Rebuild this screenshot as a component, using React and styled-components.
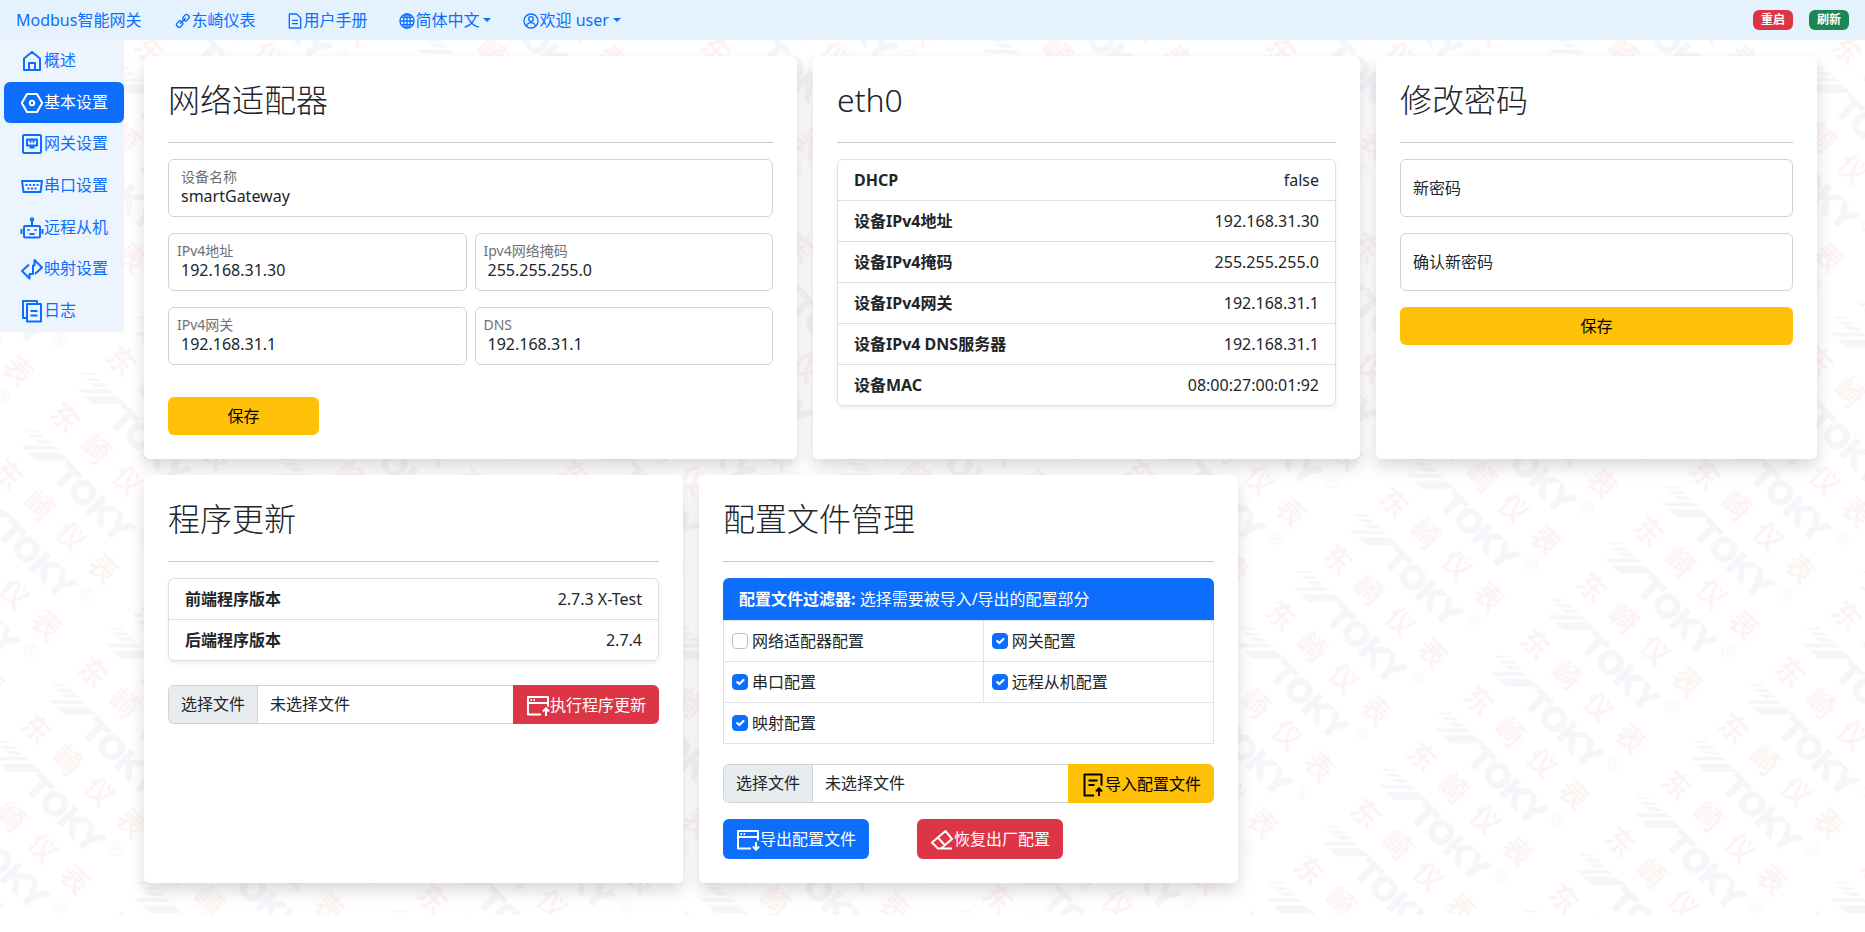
import React from 'react';
import styled, { createGlobalStyle } from 'styled-components';

const deviceInfo = [
    { label: 'DHCP', value: 'false' },
    { label: '设备IPv4地址', value: '192.168.31.30' },
    { label: '设备IPv4掩码', value: '255.255.255.0' },
    { label: '设备IPv4网关', value: '192.168.31.1' },
    { label: '设备IPv4 DNS服务器', value: '192.168.31.1' },
    { label: '设备MAC', value: '08:00:27:00:01:92' },
];

const versions = [
    { label: '前端程序版本', value: '2.7.3 X-Test' },
    { label: '后端程序版本', value: '2.7.4' },
];

const filters = [
    [
        { id: 'adapter', label: '网络适配器配置', checked: false },
        { id: 'gateway', label: '网关配置', checked: true },
    ],
    [
        { id: 'serial', label: '串口配置', checked: true },
        { id: 'remote', label: '远程从机配置', checked: true },
    ],
    [{ id: 'mapping', label: '映射配置', checked: true }],
];

const icons = {
    link: (
        <g transform="rotate(-45 12 12)">
            <rect x="0.5" y="8" width="9.5" height="7.5" rx="3" />
            <rect x="14" y="8" width="9.5" height="7.5" rx="3" />
            <path d="M6 11.8h12" />
        </g>
    ),
    doc: <path d="M3.5 1.5h11l6 6v15h-17zM7.5 11h9M7.5 16h9" />,
    globe: (
        <>
            <circle cx="12" cy="12" r="10.5" />
            <ellipse cx="12" cy="12" rx="5" ry="10.5" />
            <path d="M12 1.5v21M1.5 12h21M3.5 6.5h17M3.5 17.5h17" />
        </>
    ),
    user: (
        <>
            <circle cx="12" cy="12" r="10.5" />
            <circle cx="12" cy="9" r="3.5" />
            <path d="M5.5 19.5c1-4 3.5-5 6.5-5s5.5 1 6.5 5" />
        </>
    ),
    home: <path d="M4 21V9.5L12 3l8 6.5V21zM9 21v-7h6v7" />,
    basic: (
        <>
            <path d="M7 3h10l5.2 9L17 21H7L1.8 12z" />
            <circle cx="12" cy="12" r="2.2" />
        </>
    ),
    gateway: (
        <>
            <rect x="3" y="3" width="18" height="18" rx="1" />
            <path d="M7 7.5h10v6H7zM9.5 15.5h5M10.5 7.5v3M13.5 7.5v3" />
        </>
    ),
    serial: (
        <>
            <path d="M2 7h20l-1.5 11h-17z" />
            <path d="M5.5 11h2M9.2 11h2M12.9 11h2M16.6 11h2M7.5 14.5h2M11 14.5h2M14.5 14.5h2" />
        </>
    ),
    robot: (
        <>
            <rect x="4" y="10" width="16" height="11.5" rx="1" />
            <path d="M12 5v5M1.5 13v5M22.5 13v5M9.5 18h5M8.5 13v2M15.5 13v2" />
            <circle cx="12" cy="3.5" r="1.2" />
        </>
    ),
    mapping: <path d="M9 7.5L2 14l7.500 7.500V17h3.500V8.500h1.500V3L22 10.500 15 17" />,
    log: (
        <>
            <path d="M6 19H3V2h14v3" />
            <path d="M7 5h14v17.5H7zM10.5 12h7M10.5 16.5h7" />
        </>
    ),
    windowUp: (
        <>
            <path d="M15 20.5H2V3h20v9.5M2 9h20M4.5 6h1.5M7.5 6H9" />
            <path d="M20 22v-7M17 17.5l3-3.2 3 3.2" />
        </>
    ),
    windowDown: (
        <>
            <path d="M15 20.5H2V3h20v9.5M2 9h20M4.5 6h1.5M7.5 6H9" />
            <path d="M20 14v7M17 18.5l3 3.2 3-3.2" />
        </>
    ),
    docUp: (
        <>
            <path d="M13 22.5H3.5v-21h17v11M7.5 7.5h9M7.5 12h6" />
            <path d="M18 23v-7M15 18.5l3-3.2 3 3.2" />
        </>
    ),
    eraser: <path d="M8 20.5L2 14.5 15.5 3l6.5 8-11 9.5zM8 9.5l7 8M8 20.5h14" />,
};

const Icon = ({ name, size = 24 }) => (
    <IconSvg viewBox="0 0 24 24" width={size} height={size} aria-hidden="true">
        {icons[name]}
    </IconSvg>
);

// Brand pattern, repeated along the 45 degree diagonal
const Watermark = () => (
    <WatermarkSvg aria-hidden="true">
        <defs>
            <pattern
                id="brand"
                x="-86"
                y="-11"
                width="200"
                height="80"
                patternUnits="userSpaceOnUse"
                patternTransform="rotate(45)"
            >
                <g fill="#f5f6f9">
                    <g transform="translate(95 60) rotate(-45)">
                        <path d="M-62-64h14l3 2h-13zM-58-59h14l5 3h-13zM-53-54h14l6 4h-12zM-64-48h31l7 4h-34zM-57-41h32l10 8h-34z" />
                    </g>
                    <BrandText x="60" y="72">TOKY</BrandText>
                    <MarkText x="161" y="56">®</MarkText>
                </g>
                <BrandChinese y="31">
                    <tspan x="13">东</tspan>
                    <tspan x="57">崎</tspan>
                    <tspan x="102">仪</tspan>
                    <tspan x="147">表</tspan>
                </BrandChinese>
            </pattern>
        </defs>
        <rect width="100%" height="100%" fill="url(#brand)" />
    </WatermarkSvg>
);

const Field = ({ id, label, value, tight }) => (
    <FieldBox>
        <FieldLabel htmlFor={id} $tight={tight}>{label}</FieldLabel>
        <FieldInput id={id} defaultValue={value} />
    </FieldBox>
);

const InfoList = ({ rows }) => (
    <List>
        {rows.map((row) => (
            <ListRow key={row.label}>
                <dt>{row.label}</dt>
                <dd>{row.value}</dd>
            </ListRow>
        ))}
    </List>
);

const FilePicker = ({ id, children }) => (
    <FileGroup>
        <FileLabel htmlFor={id}>
            <FileChoose>选择文件</FileChoose>
            <FileName>未选择文件</FileName>
        </FileLabel>
        <HiddenFile id={id} type="file" />
        {children}
    </FileGroup>
);

const App = () => (
    <>
        <GlobalStyle />
        <Page>
            <Watermark />
            <Header>
                <HeaderNav>
                    <Brand href="#">Modbus智能网关</Brand>
                    <HeaderLink href="#"><Icon name="link" size={16} />东崎仪表</HeaderLink>
                    <HeaderLink href="#"><Icon name="doc" size={16} />用户手册</HeaderLink>
                    <HeaderMenu><Icon name="globe" size={16} />简体中文<Caret /></HeaderMenu>
                    <HeaderMenu><Icon name="user" size={16} />欢迎 user<Caret /></HeaderMenu>
                </HeaderNav>
                <HeaderActions>
                    <BadgeButton $color="#dc3545">重启</BadgeButton>
                    <BadgeButton $color="#198754">刷新</BadgeButton>
                </HeaderActions>
            </Header>
            <Body>
                <Sidebar>
                    <SideLink href="#"><Icon name="home" />概述</SideLink>
                    <SideLink href="#" $active><Icon name="basic" />基本设置</SideLink>
                    <SideLink href="#"><Icon name="gateway" />网关设置</SideLink>
                    <SideLink href="#"><Icon name="serial" />串口设置</SideLink>
                    <SideLink href="#"><Icon name="robot" />远程从机</SideLink>
                    <SideLink href="#"><Icon name="mapping" />映射设置</SideLink>
                    <SideLink href="#"><Icon name="log" />日志</SideLink>
                </Sidebar>
                <Main>
                    <CardRow $columns="653fr 547fr 441fr">
                        <Card>
                            <Title>网络适配器</Title>
                            <Divider />
                            <Fields>
                                <Field id="name" label="设备名称" value="smartGateway" />
                                <FieldPair>
                                    <Field id="ip" label="IPv4地址" value="192.168.31.30" tight />
                                    <Field id="mask" label="Ipv4网络掩码" value="255.255.255.0" tight />
                                </FieldPair>
                                <FieldPair>
                                    <Field id="gw" label="IPv4网关" value="192.168.31.1" tight />
                                    <Field id="dns" label="DNS" value="192.168.31.1" tight />
                                </FieldPair>
                            </Fields>
                            <SaveButton>保存</SaveButton>
                        </Card>
                        <Card>
                            <Title>eth0</Title>
                            <Divider />
                            <InfoList rows={deviceInfo} />
                        </Card>
                        <Card>
                            <Title>修改密码</Title>
                            <Divider />
                            <Fields>
                                <PasswordInput type="password" placeholder="新密码" aria-label="新密码" />
                                <PasswordInput type="password" placeholder="确认新密码" aria-label="确认新密码" />
                                <Button $color="#ffc107" $text="#000">保存</Button>
                            </Fields>
                        </Card>
                    </CardRow>
                    <CardRow $columns="539fr 539fr 563fr">
                        <Card>
                            <Title>程序更新</Title>
                            <Divider />
                            <InfoList rows={versions} />
                            <UpdateSection>
                                <FilePicker id="firmware">
                                    <GroupButton $color="#dc3545" $text="#fff">
                                        <Icon name="windowUp" />执行程序更新
                                    </GroupButton>
                                </FilePicker>
                            </UpdateSection>
                        </Card>
                        <Card>
                            <Title>配置文件管理</Title>
                            <Divider />
                            <FilterTable>
                                <FilterCaption>
                                    <b>配置文件过滤器:</b> 选择需要被导入/导出的配置部分
                                </FilterCaption>
                                <colgroup>
                                    <col width="53%" />
                                    <col width="47%" />
                                </colgroup>
                                <tbody>
                                    {filters.map((row) => (
                                        <tr key={row[0].id}>
                                            {row.map((item) => (
                                                <FilterCell key={item.id} colSpan={row.length === 1 ? 2 : 1}>
                                                    <CheckLabel>
                                                        <Checkbox type="checkbox" defaultChecked={item.checked} />
                                                        {item.label}
                                                    </CheckLabel>
                                                </FilterCell>
                                            ))}
                                        </tr>
                                    ))}
                                </tbody>
                            </FilterTable>
                            <ConfigActions>
                                <FilePicker id="config">
                                    <GroupButton $color="#ffc107" $text="#000">
                                        <Icon name="docUp" />导入配置文件
                                    </GroupButton>
                                </FilePicker>
                                <ButtonRow>
                                    <TallButton $color="#0d6efd" $text="#fff">
                                        <Icon name="windowDown" />导出配置文件
                                    </TallButton>
                                    <TallButton $color="#dc3545" $text="#fff">
                                        <Icon name="eraser" />恢复出厂配置
                                    </TallButton>
                                </ButtonRow>
                            </ConfigActions>
                        </Card>
                    </CardRow>
                </Main>
            </Body>
        </Page>
    </>
);

const GlobalStyle = createGlobalStyle`
* {
    box-sizing: border-box;
}
body {
    margin: 0;
    background: #fff;
    color: #212529;
    font-family: "Noto Sans", "Noto Sans CJK SC", sans-serif;
    font-size: 16px;
    line-height: 24px;
}
button, input {
    font: inherit;
    color: inherit;
}
a {
    text-decoration: none;
}
`;

const Page = styled.div`
position: relative;
`;

const WatermarkSvg = styled.svg`
position: absolute;
top: 0;
left: 0;
width: 100%;
height: 100%;
z-index: -1;
`;

const BrandText = styled.text`
font: bold 34px "Liberation Sans", sans-serif;
stroke: #f5f6f9;
stroke-width: 2px;
stroke-linejoin: round;
`;

const MarkText = styled.text`
font: 20px "Liberation Sans", sans-serif;
`;

const BrandChinese = styled.text`
font: bold 28px "Noto Sans CJK SC", sans-serif;
fill: #fef3f3;
`;

const IconSvg = styled.svg`
flex: none;
margin-top: 2px;
fill: none;
stroke: currentColor;
stroke-width: 2px;
stroke-linejoin: round;
`;

const Header = styled.header`
display: flex;
justify-content: space-between;
align-items: center;
height: 40px;
padding: 0 16px;
background: #e3f2fd;
`;

const HeaderNav = styled.nav`
display: flex;
align-items: center;
`;

const Brand = styled.a`
margin-right: 18px;
color: #0d6efd;
`;

const HeaderLink = styled.a`
display: flex;
align-items: center;
padding: 0 16px;
color: #0d6efd;
`;

const HeaderMenu = styled.button`
display: flex;
align-items: center;
padding: 0 16px;
border: 0;
background: none;
color: #0d6efd;
`;

const Caret = styled.span`
margin-left: 4px;
border: 4px solid transparent;
border-top-color: currentColor;
border-bottom: 0;
`;

const HeaderActions = styled.div`
display: flex;
gap: 16px;
`;

const BadgeButton = styled.button`
height: 20px;
padding: 0 8px;
border: 0;
border-radius: 6px;
background: ${({ $color }) => $color};
color: #fff;
font-size: 12px;
font-weight: 700;
line-height: 20px;
`;

const Body = styled.div`
display: flex;
align-items: flex-start;
`;

const Sidebar = styled.nav`
display: flex;
flex: none;
flex-direction: column;
width: 124px;
height: 292px;
padding-left: 4px;
background: #ecf5fd;
`;

const SideLink = styled.a`
display: flex;
flex: 1;
align-items: center;
padding: 0 0 2px 16px;
border-radius: 6px;
background: ${({ $active }) => ($active ? '#0d6efd' : 'transparent')};
color: ${({ $active }) => ($active ? '#fff' : '#0d6efd')};
`;

const Main = styled.main`
display: flex;
flex: 1;
flex-direction: column;
gap: 16px;
min-width: 0;
padding: 16px 48px 32px 20px;
`;

const CardRow = styled.div`
display: grid;
grid-template-columns: ${({ $columns }) => $columns};
gap: 16px;
`;

const Card = styled.section`
min-width: 0;
padding: 24px;
border-radius: 6px;
background: #fff;
box-shadow: 0 8px 16px rgba(0, 0, 0, 0.15);
`;

const Title = styled.h2`
margin: 0 0 22px;
font-size: 32px;
font-weight: 300;
line-height: 40px;
`;

const Divider = styled.hr`
height: 1px;
margin: 0 0 16px;
border: 0;
background: #c8c9ca;
`;

const Fields = styled.div`
display: grid;
gap: 16px;
`;

const FieldPair = styled.div`
display: grid;
grid-template-columns: 1fr 1fr;
gap: 8px;
`;

const FieldBox = styled.div`
display: flex;
flex-direction: column;
height: 58px;
padding-top: 8px;
border: 1px solid #ced4da;
border-radius: 6px;
background: #fff;
`;

const FieldLabel = styled.label`
padding-left: ${({ $tight }) => ($tight ? '8px' : '12px')};
color: #6f7275;
font-size: 14px;
line-height: 18px;
`;

const FieldInput = styled.input`
width: 100%;
height: 20px;
padding: 0 12px;
border: 0;
outline: 0;
background: none;
`;

const PasswordInput = styled.input`
width: 100%;
height: 58px;
padding: 0 12px;
border: 1px solid #ced4da;
border-radius: 6px;
background: #fff;

&::placeholder {
    color: #212529;
    opacity: 1;
}
`;

const Button = styled.button`
display: flex;
align-items: center;
justify-content: center;
height: 38px;
padding: 0 13px;
border: 0;
border-radius: 6px;
background: ${({ $color }) => $color};
color: ${({ $text }) => $text};
white-space: nowrap;
`;

const SaveButton = styled(Button).attrs({ $color: '#ffc107', $text: '#000' })`
width: 25%;
margin-top: 32px;
`;

const TallButton = styled(Button)`
height: 40px;
`;

const GroupButton = styled(Button)`
height: auto;
border-radius: 0 6px 6px 0;
`;

const List = styled.dl`
margin: 0;
border: 1px solid #dedfe0;
border-radius: 6px;
box-shadow: 0 2px 4px rgba(0, 0, 0, 0.075);
`;

const ListRow = styled.div`
display: flex;
justify-content: space-between;
padding: 8px 16px;

& + & {
    border-top: 1px solid #dedfe0;
}

dt {
    font-weight: 700;
}

dd {
    margin: 0;
}
`;

const UpdateSection = styled.div`
margin-top: 24px;
`;

const FileGroup = styled.div`
display: flex;
position: relative;
height: 39px;
`;

const FileLabel = styled.label`
display: flex;
flex: 1;
border: 1px solid #ced4da;
border-right: 0;
border-radius: 6px 0 0 6px;
background: #fff;
line-height: 37px;
overflow: hidden;
`;

const FileChoose = styled.span`
padding: 0 12px;
border-right: 1px solid #ced4da;
background: #e9ecef;
`;

const FileName = styled.span`
padding: 0 12px;
`;

const HiddenFile = styled.input`
position: absolute;
width: 1px;
height: 1px;
opacity: 0;
`;

const FilterTable = styled.table`
width: 100%;
border-collapse: collapse;
table-layout: fixed;
`;

const FilterCaption = styled.caption`
padding: 9px 16px;
border-radius: 6px 6px 0 0;
background: #0d6efd;
color: #fff;
text-align: left;
`;

const FilterCell = styled.td`
padding: 8px;
border: 1px solid #dee2e6;
`;

const CheckLabel = styled.label`
display: flex;
align-items: center;
gap: 4px;
`;

const Checkbox = styled.input`
flex: none;
width: 16px;
height: 16px;
margin: 0;
border: 1px solid #bfbfbf;
border-radius: 4px;
background: #fff;
appearance: none;

&:checked {
    border-color: #0d6efd;
    background: #0d6efd url("data:image/svg+xml,%3Csvg xmlns='http://www.w3.org/2000/svg' viewBox='0 0 20 20'%3E%3Cpath fill='none' stroke='%23fff' stroke-linecap='round' stroke-linejoin='round' stroke-width='3' d='m6 10 3 3 6-6'/%3E%3C/svg%3E");
}
`;

const ConfigActions = styled.div`
display: grid;
gap: 16px;
margin-top: 20px;
`;

const ButtonRow = styled.div`
display: flex;
gap: 48px;
`;

export default App;
